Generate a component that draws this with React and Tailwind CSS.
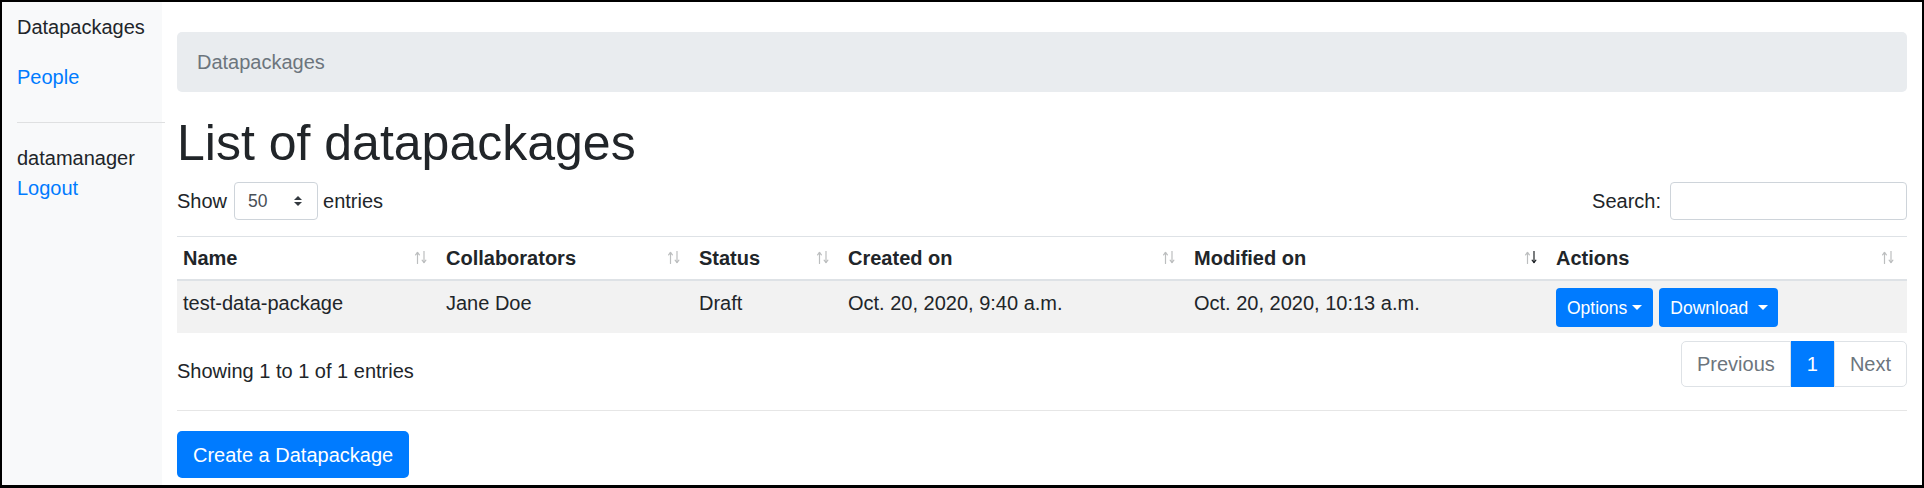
import React from 'react';

const SortIcon = ({ active }) => (
    <svg width="12" height="13" viewBox="0 0 12 13" className="shrink-0 mr-[7px] mb-[2px]">
        <g fill="none" strokeWidth="1.2" strokeLinecap="round" strokeLinejoin="round">
            <g stroke="#bcbebf">
                <path d="M2.5 1.5V12.5" />
                <path d="M0.6 3.8L2.5 1.5L4.4 3.8" />
            </g>
            <g stroke={active ? '#212529' : '#bcbebf'}>
                <path d="M9 0.5V11.5" />
                <path d="M7.1 9.2L9 11.5L10.9 9.2" />
            </g>
        </g>
    </svg>
);

const Caret = () => (
    <span className="inline-block w-0 h-0 border-t-[5px] border-t-white border-x-[5px] border-x-transparent" />
);

const columns = [
    { label: 'Name', width: 'w-[263px]' },
    { label: 'Collaborators', width: 'w-[253px]' },
    { label: 'Status', width: 'w-[149px]' },
    { label: 'Created on', width: 'w-[346px]' },
    { label: 'Modified on', width: 'w-[362px]', active: true },
    { label: 'Actions', width: '' },
];

const App = () => {
    return (
        <div className="h-[488px] overflow-hidden border-t-2 border-l-2 border-r-2 border-b-[3px] border-black bg-white flex font-['Liberation_Sans',Arial,sans-serif] text-[20px] leading-[30px] text-[#212529]">
            <aside className="w-[160px] shrink-0 bg-[#f8f9fa] pt-[10px] pl-[15px]">
                <div>Datapackages</div>
                <div className="mt-[20px] text-[#007bff]">People</div>
                <div className="mt-[30px] h-px bg-[#dfe0e1] mr-[-3px]" />
                <div className="mt-[20px]">datamanager</div>
                <div className="text-[#007bff]">Logout</div>
            </aside>

            <main className="flex-1 min-w-0 px-[15px] pt-[30px]">
                <div className="h-[60px] rounded-[5px] bg-[#e9ecef] px-[20px] py-[15px] text-[#6c757d]">
                    Datapackages
                </div>

                <h1 className="mt-[21px] mb-[9px] text-[50px] leading-[60px] font-normal">List of datapackages</h1>

                <div className="flex items-center justify-between h-[38px]">
                    <div className="flex items-center">
                        <span>Show</span>
                        <div className="ml-[7px] mr-[5px] w-[84px] h-[38px] rounded-[4px] border border-[#ced4da] bg-white flex items-center justify-between pl-[13px] pr-[15px] text-[17.5px] text-[#495057]">
                            <span>50</span>
                            <svg width="8" height="10" viewBox="0 0 4 5">
                                <path d="M2 0L0 2h4zm0 5L0 3h4z" fill="#343a40" />
                            </svg>
                        </div>
                        <span>entries</span>
                    </div>
                    <div className="flex items-center">
                        <span>Search:</span>
                        <div className="ml-[9px] w-[237px] h-[38px] rounded-[4px] border border-[#ced4da] bg-white" />
                    </div>
                </div>

                <table className="mt-[16px] w-full table-fixed border-collapse">
                    <thead>
                        <tr>
                            {columns.map(col => (
                                <th
                                    key={col.label}
                                    className={`${col.width} border-t border-b-2 border-[#dee2e6] p-[6px] text-left font-bold align-bottom`}
                                >
                                    <div className="flex items-center justify-between">
                                        <span>{col.label}</span>
                                        <SortIcon active={col.active} />
                                    </div>
                                </th>
                            ))}
                        </tr>
                    </thead>
                    <tbody>
                        <tr className="bg-[#f2f2f2]">
                            <td className="border-t border-[#dee2e6] pt-[7px] px-[6px] pb-[6px] align-top">test-data-package</td>
                            <td className="border-t border-[#dee2e6] pt-[7px] px-[6px] pb-[6px] align-top">Jane Doe</td>
                            <td className="border-t border-[#dee2e6] pt-[7px] px-[6px] pb-[6px] align-top">Draft</td>
                            <td className="border-t border-[#dee2e6] pt-[7px] px-[6px] pb-[6px] align-top">Oct. 20, 2020, 9:40 a.m.</td>
                            <td className="border-t border-[#dee2e6] pt-[7px] px-[6px] pb-[6px] align-top">Oct. 20, 2020, 10:13 a.m.</td>
                            <td className="border-t border-[#dee2e6] pt-[7px] px-[6px] pb-[6px] align-top">
                                <div className="flex gap-[6px]">
                                    <button className="h-[39px] rounded-[4px] bg-[#007bff] text-white text-[17.5px] leading-[26px] pl-[11px] pr-[11px] flex items-center gap-[5px]">
                                        Options
                                        <Caret />
                                    </button>
                                    <button className="h-[39px] rounded-[4px] bg-[#007bff] text-white text-[17.5px] leading-[26px] pl-[11px] pr-[10px] flex items-center gap-[10px]">
                                        Download
                                        <Caret />
                                    </button>
                                </div>
                            </td>
                        </tr>
                    </tbody>
                </table>

                <div className="mt-[6px] flex items-start justify-between">
                    <div className="pt-[17px]">Showing 1 to 1 of 1 entries</div>
                    <div className="mt-[2px] mb-[2px] flex h-[46px] leading-[25px]">
                        <span className="flex items-center px-[15px] border border-[#dee2e6] rounded-l-[5px] text-[#6c757d] bg-white">Previous</span>
                        <span className="flex items-center px-[15px] bg-[#007bff] text-white border border-[#007bff]">1</span>
                        <span className="flex items-center px-[15px] border border-[#dee2e6] rounded-r-[5px] text-[#6c757d] bg-white">Next</span>
                    </div>
                </div>

                <div className="mt-[21px] mb-[20px] h-px bg-[#e6e6e6]" />

                <button className="h-[47px] rounded-[5px] bg-[#007bff] text-white px-[16px]">
                    Create a Datapackage
                </button>
            </main>
        </div>
    );
};

export default App;
